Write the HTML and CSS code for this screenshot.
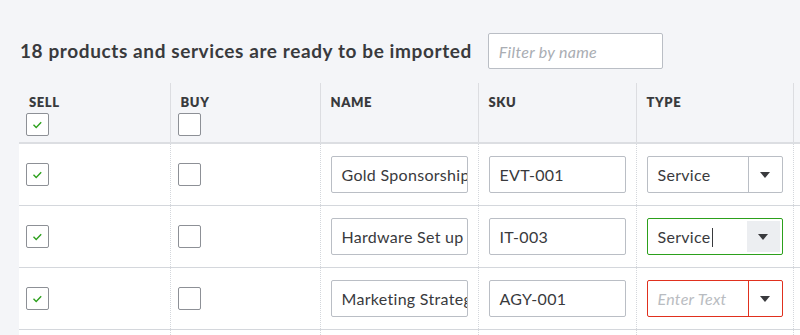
FILE: index.html
```html
<!DOCTYPE html>
<html lang="en">
<head>
    <meta charset="UTF-8" />
    <title>Import products and services</title>
    <link rel="stylesheet" href="styles.css">
</head>
<body>
<div class="page">
    <div class="toolbar">
        <h1>18 products and services are ready to be imported</h1>
        <input class="filter" type="text" placeholder="Filter by name" />
    </div>

    <table class="grid">
        <colgroup>
            <col class="c-sell"><col class="c-buy"><col class="c-name"><col class="c-sku"><col class="c-type"><col class="c-more">
        </colgroup>
        <thead>
        <tr>
            <th><div class="label">SELL</div><span class="check on"></span></th>
            <th><div class="label">BUY</div><span class="check"></span></th>
            <th><div class="label">NAME</div></th>
            <th><div class="label">SKU</div></th>
            <th><div class="label">TYPE</div></th>
            <th></th>
        </tr>
        </thead>
        <tbody>
        <tr>
            <td><span class="check on"></span></td>
            <td><span class="check"></span></td>
            <td><div class="field">Gold Sponsorship Package</div></td>
            <td><div class="field">EVT-001</div></td>
            <td>
                <div class="select">
                    <span class="value">Service</span>
                    <span class="arrow"></span>
                </div>
            </td>
            <td></td>
        </tr>
        <tr>
            <td><span class="check on"></span></td>
            <td><span class="check"></span></td>
            <td><div class="field">Hardware Set up and Installation</div></td>
            <td><div class="field">IT-003</div></td>
            <td>
                <div class="select focus">
                    <span class="value">Service<span class="caret"></span></span>
                    <span class="arrow"></span>
                </div>
            </td>
            <td></td>
        </tr>
        <tr>
            <td><span class="check on"></span></td>
            <td><span class="check"></span></td>
            <td><div class="field">Marketing Strategy Session</div></td>
            <td><div class="field">AGY-001</div></td>
            <td>
                <div class="select error">
                    <span class="value empty">Enter Text</span>
                    <span class="arrow"></span>
                </div>
            </td>
            <td></td>
        </tr>
        <tr>
            <td><span class="check on"></span></td>
            <td><span class="check"></span></td>
            <td><div class="field">Annual Support Plan</div></td>
            <td><div class="field">SUP-002</div></td>
            <td>
                <div class="select">
                    <span class="value">Service</span>
                    <span class="arrow"></span>
                </div>
            </td>
            <td></td>
        </tr>
        </tbody>
    </table>
</div>
</body>
</html>
```

FILE: styles.css
```css
body {
    margin: 0;
    padding: 0;
    font-family: Lato, "Open Sans", sans-serif;
    background-color: #F4F5F8;
    color: #393A3D;
    overflow: hidden;
}

.page {
    padding-top: 33px;
}

.toolbar {
    display: flex;
    align-items: baseline;
    gap: 16px;
    padding-left: 20px;
    height: 36px;
}

h1 {
    margin: 0;
    font-size: 19px;
    font-weight: bold;
    letter-spacing: 0.6px;
}

.filter {
    box-sizing: border-box;
    width: 175px;
    height: 36px;
    padding: 0 10px;
    border: 1px solid #BABEC5;
    border-radius: 2px;
    background-color: #FFFFFF;
    font-family: inherit;
    font-size: 16px;
    font-style: italic;
    letter-spacing: 0.3px;
}
.filter::placeholder {
    color: #A9ADB3;
}

.grid {
    margin: 14px 0 0 19px;
    border-collapse: collapse;
    table-layout: fixed;
    width: 900px;
}

.c-sell { width: 151px; }
.c-buy { width: 150px; }
.c-name { width: 158px; }
.c-sku { width: 158px; }
.c-type { width: 157px; }
.c-more { width: 126px; }

th {
    height: 60px;
    padding: 0 7px;
    vertical-align: top;
    text-align: left;
    border-left: 1px solid #DCDDE1;
    border-bottom: 2px solid #DCDEE2;
    box-sizing: border-box;
}
th:first-child {
    border-left: none;
}

.label {
    padding: 11px 0 0 3px;
    font-size: 13px;
    font-weight: 800;
    letter-spacing: 0.6px;
    line-height: 16px;
    height: 19px;
}

td {
    height: 61px;
    padding: 0 10px;
    background-color: #FFFFFF;
    border-left: 1px dotted #D4D7DC;
    border-bottom: 1px solid #D4D7DC;
    vertical-align: middle;
}
td:first-child,
td:nth-child(2) {
    padding: 0 7px;
}
td:first-child {
    border-left: none;
}

.check {
    display: block;
    box-sizing: border-box;
    width: 23px;
    height: 23px;
    border: 1px solid #8D9096;
    border-radius: 2px;
    background-color: #FFFFFF;
}
.check.on {
    background: #FFFFFF url("data:image/svg+xml,%3Csvg xmlns='http://www.w3.org/2000/svg' width='21' height='21'%3E%3Cpath d='M6.5 10.8 L9.2 13.4 L14.2 8.3' fill='none' stroke='%232CA01C' stroke-width='1.4'/%3E%3C/svg%3E") no-repeat center;
}

.field {
    box-sizing: border-box;
    height: 37px;
    padding: 0 10px;
    border: 1px solid #BABEC5;
    border-radius: 2px;
    background-color: #FFFFFF;
    font-size: 16px;
    letter-spacing: 0.3px;
    line-height: 35px;
    white-space: nowrap;
    overflow: hidden;
}

.select {
    box-sizing: border-box;
    display: flex;
    height: 37px;
    border: 1px solid #BABEC5;
    border-radius: 2px;
    background-color: #FFFFFF;
    font-size: 16px;
    letter-spacing: 0.3px;
    line-height: 35px;
}
.select .value {
    flex: 1;
    padding: 0 10px;
    white-space: nowrap;
    overflow: hidden;
}
.select .value.empty {
    color: #B9BCC1;
    font-style: italic;
}
.select .arrow {
    width: 33px;
    border-left: 1px solid #BABEC5;
    background: url("data:image/svg+xml,%3Csvg xmlns='http://www.w3.org/2000/svg' width='10' height='6'%3E%3Cpath d='M0 0 H10 L5 6 Z' fill='%23393A3D'/%3E%3C/svg%3E") no-repeat center;
}
.select.focus {
    border-color: #2CA01C;
}
.select.focus .arrow {
    border-left: none;
    margin: 2px 2px 2px 0;
    background-color: #ECEEF1;
}
.select.error,
.select.error .arrow {
    border-color: #E0301E;
}

.caret {
    display: inline-block;
    width: 1px;
    height: 19px;
    margin-left: 1px;
    vertical-align: -4px;
    background-color: #393A3D;
}
```
